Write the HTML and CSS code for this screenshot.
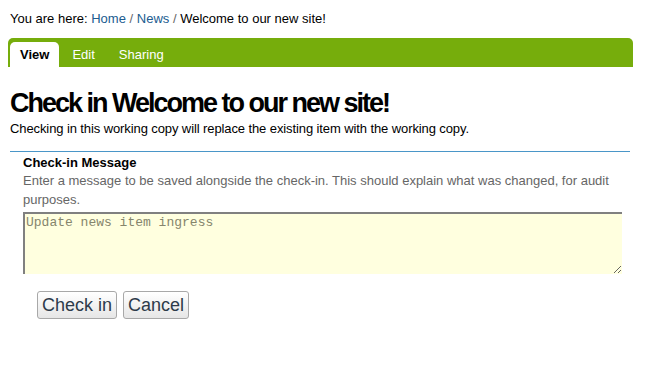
FILE: index.html
```html
<!DOCTYPE html>
<html lang="en">
<head>
  <meta charset="UTF-8">
  <title>Check in Welcome to our new site!</title>
  <link rel="stylesheet" href="styles.css">
</head>
<body>

<div class="page">
  <div class="breadcrumbs">
    You are here: <a href="#">Home</a> <span class="sep">/</span> <a href="#">News</a> <span class="sep">/</span> Welcome to our new site!
  </div>

  <ul class="tabs">
    <li class="selected"><a href="#">View</a></li>
    <li><a href="#">Edit</a></li>
    <li><a href="#">Sharing</a></li>
  </ul>

  <div class="content">
    <h1>Check in Welcome to our new site!</h1>
    <p class="description">Checking in this working copy will replace the existing item with the working copy.</p>

    <form class="checkin-form">
      <div class="field">
        <label for="message">Check-in Message</label>
        <div class="help">Enter a message to be saved alongside the check-in. This should explain what was changed, for audit purposes.</div>
        <textarea id="message" name="message" placeholder="Update news item ingress"></textarea>
      </div>

      <div class="buttons">
        <button type="submit">Check in</button>
        <button type="button">Cancel</button>
      </div>
    </form>
  </div>
</div>

</body>
</html>
```

FILE: styles.css
```css
body {
  font-family: "Liberation Sans", Arial, sans-serif;
  background: #fff;
  color: #000;
  margin: 0;
  padding: 0;
}

.page {
  padding: 0 13px 0 8px;
}

a {
  color: #205c90;
  text-decoration: none;
}

.breadcrumbs {
  font-size: 13px;
  padding: 11px 0 0 2px;
  height: 27px;
}

.breadcrumbs .sep {
  color: #666;
}

.tabs {
  list-style: none;
  margin: 0;
  padding: 4px 0 0 2px;
  height: 25px;
  background: #76ad0c;
  border-radius: 5px 5px 0 0;
  display: flex;
  gap: 2px;
}

.tabs li a {
  display: block;
  color: #fff;
  font-size: 13px;
  line-height: 25px;
  padding: 0 11px;
}

.tabs li.selected a {
  background: #fff;
  color: #000;
  font-weight: bold;
  padding: 0 10px;
  border-radius: 5px 5px 0 0;
}

.content {
  padding: 0 3px 0 2px;
}

h1 {
  font-size: 27px;
  letter-spacing: -2px;
  margin: 20px 0 0 0;
  line-height: 32px;
}

.description {
  font-size: 13px;
  letter-spacing: -0.1px;
  margin: 1px 0 0 0;
  line-height: 18px;
}

.checkin-form {
  margin-top: 13px;
  border-top: 1px solid #4a96c8;
}

.field {
  padding: 2px 0 0 13px;
}

.field label {
  display: block;
  font-weight: bold;
  font-size: 13px;
  line-height: 17px;
}

.help {
  color: #666;
  font-size: 13px;
  line-height: 19px;
}

textarea {
  display: block;
  box-sizing: border-box;
  width: 599px;
  height: 62px;
  margin-top: 3px;
  background: #ffffdf;
  border-style: solid;
  border-width: 2px 0 0 2px;
  border-color: #808080;
  padding: 1px 2px 1px 1px;
  font-family: "Liberation Mono", monospace;
  font-size: 13px;
}

textarea::placeholder {
  color: #85856c;
}

.buttons {
  padding: 17px 0 0 27px;
  display: flex;
  gap: 6px;
}

.buttons button {
  font-family: "Liberation Sans", Arial, sans-serif;
  font-size: 18px;
  color: #2d3b4a;
  background: linear-gradient(#ffffff, #e6e6e6);
  border: 1px solid #a8a8a8;
  border-radius: 3px;
  padding: 1px 4px;
  height: 28px;
}
```
